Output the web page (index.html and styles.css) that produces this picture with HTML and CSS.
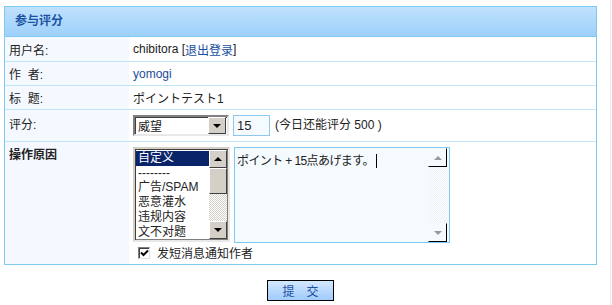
FILE: index.html
```html
<!DOCTYPE html>
<html lang="zh-CN">
<head>
  <meta charset="UTF-8">
  <title>参与评分</title>
  <link rel="stylesheet" href="styles.css">
</head>
<body>
  <div class="page">

    <!-- Rating form box -->
    <div class="box">
      <div class="box-head">参与评分</div>

      <div class="row row-short">
        <div class="label">用户名:</div>
        <div class="value">chibitora [<a href="#">退出登录</a>]</div>
      </div>

      <div class="row">
        <div class="label">作&nbsp;&nbsp;者:</div>
        <div class="value"><a href="#">yomogi</a></div>
      </div>

      <div class="row">
        <div class="label">标&nbsp;&nbsp;题:</div>
        <div class="value">ポイントテスト1</div>
      </div>

      <div class="row row-score">
        <div class="label">评分:</div>
        <div class="value">
          <div class="dropdown">
            <span class="dropdown-text">威望</span>
            <span class="dropdown-btn"><i class="tri-down"></i></span>
          </div>
          <div class="num-input">15</div>
          <span class="note">(今日还能评分 500 )</span>
        </div>
      </div>

      <div class="row row-reason">
        <div class="label bold">操作原因</div>
        <div class="value">
          <div class="reason-fields">
            <div class="listbox">
              <ul class="list">
                <li class="selected">自定义</li>
                <li>--------</li>
                <li>广告/SPAM</li>
                <li>恶意灌水</li>
                <li>违规内容</li>
                <li>文不对题</li>
              </ul>
              <div class="scrollbar">
                <span class="sb-btn"><i class="tri-up"></i></span>
                <span class="sb-thumb"></span>
                <span class="sb-track"></span>
                <span class="sb-btn"><i class="tri-down"></i></span>
              </div>
            </div>
            <div class="textarea">
              <div class="textarea-text">ポイント + 15点あげます。<span class="caret"></span></div>
              <div class="scrollbar light">
                <span class="sb-btn"><i class="tri-up"></i></span>
                <span class="sb-track"></span>
                <span class="sb-btn"><i class="tri-down"></i></span>
              </div>
            </div>
          </div>
          <label class="notify">
            <span class="checkbox">
              <svg width="9" height="8" viewBox="0 0 9 8"><path d="M1 3.5 L3.5 6 L8 1.5" fill="none" stroke="#000" stroke-width="2"/></svg>
            </span>
            发短消息通知作者
          </label>
        </div>
      </div>
    </div>

    <div class="actions">
      <button class="submit">提　交</button>
    </div>

  </div>
</body>
</html>
```

FILE: styles.css
```css
/* Reset */
* {
  margin: 0;
  padding: 0;
  box-sizing: border-box;
}

body {
  background: #fff;
  font-family: 'Liberation Sans', 'Noto Sans CJK SC', sans-serif;
  font-size: 12px;
  color: #222;
}

a {
  color: #1a4ea0;
  text-decoration: none;
}

.bold {
  font-weight: bold;
}

/* Page frame with faint right edge */
.page {
  width: 611px;
  height: 305px;
  padding: 6px 0 0 4px;
  border-right: 1px solid #ececec;
}

/* Box */
.box {
  width: 593px;
  border: 1px solid #7ccaf0;
}

.box-head {
  height: 30px;
  padding-left: 10px;
  line-height: 29px;
  font-weight: bold;
  color: #1b53a3;
  background: linear-gradient(180deg, #c0e1fd, #9dd0fa);
  border-bottom: 1px solid #7ccaf0;
}

/* Rows */
.row {
  display: flex;
  height: 24px;
  border-bottom: 1px solid #bfe7f7;
}

.row-short {
  height: 25px;
}

.row-score {
  height: 32px;
}

.row-reason {
  height: 122px;
  border-bottom: none;
}

.label {
  width: 124px;
  flex-shrink: 0;
  padding-left: 4px;
  background: #f5f9ff;
  display: flex;
  align-items: center;
}

.value {
  flex: 1;
  padding-left: 4px;
  display: flex;
  align-items: center;
}

.row-score .label {
  align-items: flex-start;
  padding-top: 5px;
}

.row-score .value {
  align-items: flex-start;
  padding-top: 5px;
}

.row-reason .label {
  align-items: flex-start;
  padding-top: 3px;
}

.row-reason .value {
  flex-direction: column;
  align-items: flex-start;
  padding-top: 5px;
}

/* Dropdown (select) */
.dropdown {
  width: 96px;
  height: 21px;
  display: flex;
  align-items: center;
  border: 2px solid;
  border-color: #808080 #e8e8e8 #e8e8e8 #808080;
  box-shadow: inset 1px 1px 0 #404040;
  background: #fff;
}

.dropdown-text {
  flex: 1;
  padding-left: 3px;
}

.dropdown-btn {
  width: 18px;
  height: 17px;
  margin-right: 1px;
  display: flex;
  align-items: center;
  justify-content: center;
  background: #d4d0c8;
  border: 1px solid;
  border-color: #fff #404040 #404040 #fff;
}

.tri-down,
.tri-up {
  width: 0;
  height: 0;
  border-left: 4px solid transparent;
  border-right: 4px solid transparent;
}

.tri-down {
  border-top: 4px solid #000;
}

.tri-up {
  border-bottom: 4px solid #000;
}

.num-input {
  width: 37px;
  height: 21px;
  margin-left: 4px;
  padding-left: 3px;
  line-height: 19px;
  border: 1px solid #8cc8ee;
  background: #f5faff;
  font-size: 13px;
}

.note {
  margin-left: 5px;
  line-height: 21px;
}

/* Reason fields */
.reason-fields {
  display: flex;
  gap: 4px;
}

.listbox {
  width: 97px;
  height: 95px;
  display: flex;
  border: 2px solid;
  border-color: #d4d0c8 #e8e8e8 #e8e8e8 #d4d0c8;
  box-shadow: inset 1px 1px 0 #404040, inset -1px -1px 0 #808080;
  background: #fff;
  padding: 1px;
}

.list {
  flex: 1;
  list-style: none;
  padding-top: 1px;
  line-height: 14.7px;
  font-size: 12px;
}

.list li {
  padding-left: 2px;
  white-space: nowrap;
}

.list .selected {
  background: #0a246a;
  color: #fff;
}

.scrollbar {
  width: 18px;
  display: flex;
  flex-direction: column;
}

.sb-btn {
  height: 18px;
  display: flex;
  align-items: center;
  justify-content: center;
  background: #d4d0c8;
  border: 1px solid;
  border-color: #fff #404040 #404040 #fff;
}

.sb-thumb {
  height: 26px;
  background: #d4d0c8;
  border: 1px solid;
  border-color: #fff #404040 #404040 #fff;
}

.sb-track {
  flex: 1;
  background: repeating-conic-gradient(#d4d0c8 0 25%, #fff 0 50%) 0 0 / 2px 2px;
}

/* Textarea */
.textarea {
  width: 216px;
  height: 96px;
  display: flex;
  border: 1px solid #7ccaf0;
  background: #f5faff;
}

.textarea-text {
  flex: 1;
  padding: 3px 0 0 2px;
  font-size: 12px;
  letter-spacing: -0.6px;
}

.caret {
  display: inline-block;
  width: 1px;
  height: 14px;
  margin-left: 2px;
  background: #000;
  vertical-align: -3px;
}

.scrollbar.light {
  width: 21px;
  padding-right: 2px;
}

.scrollbar.light .sb-btn {
  height: 19px;
  background: #f5faff;
  border-color: #f5faff #000 #000 #f5faff;
}

.scrollbar.light .tri-up {
  border-bottom-color: #999;
}

.scrollbar.light .tri-down {
  border-top-color: #999;
}

.scrollbar.light .sb-track {
  background: repeating-conic-gradient(#eef3f8 0 25%, #fafcff 0 50%) 0 0 / 2px 2px;
}

/* Notify checkbox */
.notify {
  display: flex;
  align-items: center;
  gap: 7px;
  margin-top: 1px;
  margin-left: 5px;
  font-size: 12px;
}

.checkbox {
  width: 12px;
  height: 12px;
  display: flex;
  align-items: center;
  justify-content: center;
  background: #fff;
  border: 1px solid;
  border-color: #808080 #e0e0e0 #e0e0e0 #808080;
  box-shadow: inset 1px 1px 0 #404040;
}

/* Submit */
.actions {
  display: flex;
  justify-content: center;
  padding-top: 15px;
  width: 593px;
}

.submit {
  width: 67px;
  height: 21px;
  border: 1px solid #000;
  background: linear-gradient(180deg, #d3e8ff, #a0cbfb);
  color: #1a4ea0;
  font-family: 'Noto Sans CJK SC', sans-serif;
  font-size: 12px;
}
```
